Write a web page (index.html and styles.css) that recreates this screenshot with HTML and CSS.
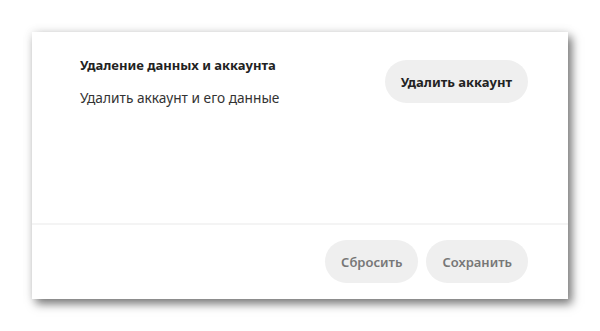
FILE: index.html
```html
<!DOCTYPE html>
<html lang="ru">
<head>
<meta charset="utf-8">
<link rel="stylesheet" href="styles.css">
</head>
<body>
<div class="stage">
  <div class="card">
    <div class="row">
      <div class="info">
        <div class="title">Удаление данных и аккаунта</div>
        <div class="desc">Удалить аккаунт и его данные</div>
      </div>
      <button class="btn btn-dark">Удалить аккаунт</button>
    </div>
    <div class="footer">
      <button class="btn btn-muted">Сбросить</button>
      <button class="btn btn-muted">Сохранить</button>
    </div>
  </div>
</div>
</body>
</html>
```
FILE: styles.css
```css
html, body {
  margin: 0;
  padding: 0;
  background: #ffffff;
}
.stage {
  padding: 32px;
  font-family: "Noto Sans", "Open Sans", sans-serif;
}
.card {
  width: 536px;
  height: 267px;
  background: #ffffff;
  box-shadow: 4px 5px 9px rgba(0, 0, 0, 0.5), 0 0 10px rgba(0, 0, 0, 0.1);
  display: flex;
  flex-direction: column;
}
.row {
  height: 193px;
  box-sizing: border-box;
  padding: 24px 40px 0 48px;
  display: flex;
  justify-content: space-between;
  align-items: flex-start;
  border-bottom: 2px solid #f4f4f4;
}
.title {
  font-size: 13px;
  font-weight: 700;
  color: #222;
  line-height: 18px;
}
.desc {
  margin-top: 15px;
  font-size: 13.7px;
  color: #333;
  line-height: 18px;
}
.btn {
  font-family: inherit;
  border: none;
  border-radius: 22px;
  height: 43px;
  padding: 0 16px;
  font-size: 13px;
  font-weight: 700;
  background: #efefef;
}
.btn-dark {
  color: #222;
  margin-top: 4px;
}
.btn-muted {
  color: #777;
  font-weight: 600;
}
.footer {
  display: flex;
  justify-content: flex-end;
  gap: 8px;
  padding: 15px 40px 0 0;
}
```
